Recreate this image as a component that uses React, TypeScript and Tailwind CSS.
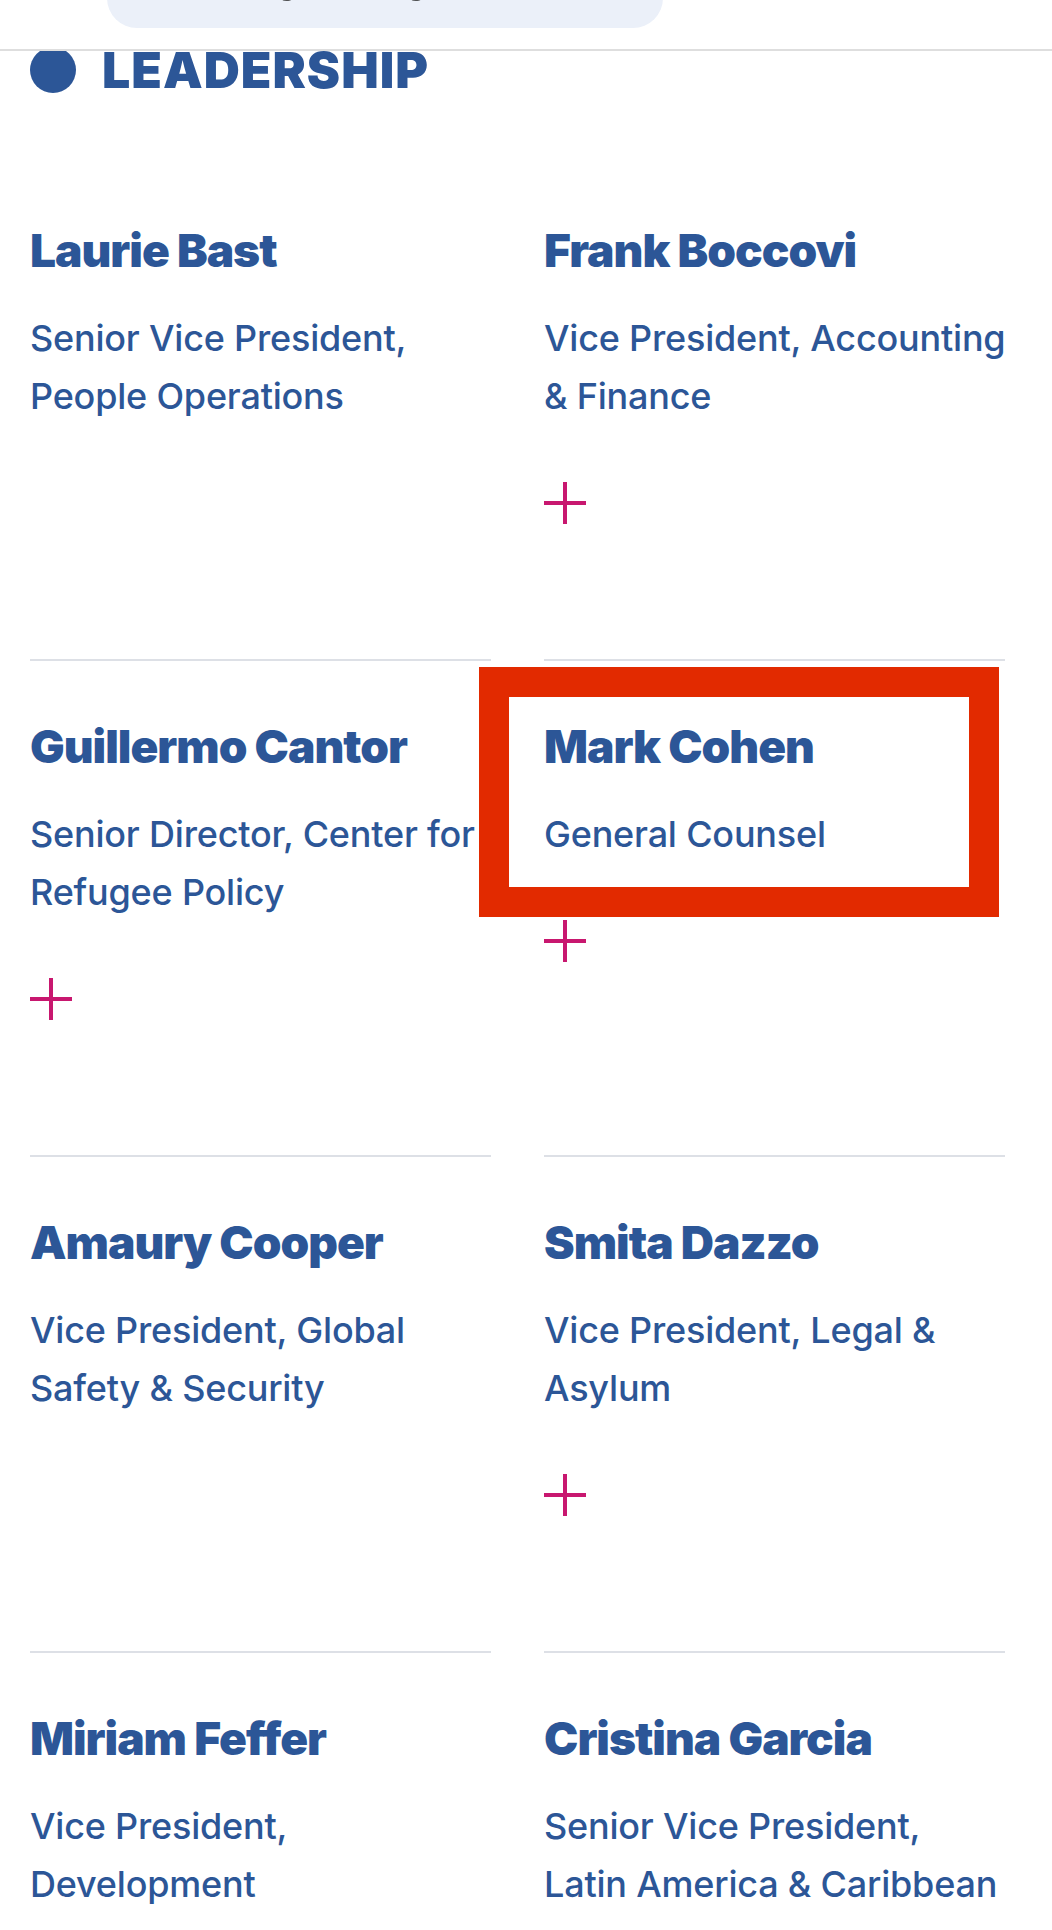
import React from "react";

interface Leader {
  name: string;
  title: string[];
  more: boolean;
  marked?: boolean;
}

const leaders: Leader[] = [
  { name: "Laurie Bast", title: ["Senior Vice President,", "People Operations"], more: false },
  { name: "Frank Boccovi", title: ["Vice President, Accounting", "& Finance"], more: true },
  { name: "Guillermo Cantor", title: ["Senior Director, Center for", "Refugee Policy"], more: true },
  { name: "Mark Cohen", title: ["General Counsel"], more: true, marked: true },
  { name: "Amaury Cooper", title: ["Vice President, Global", "Safety & Security"], more: false },
  { name: "Smita Dazzo", title: ["Vice President, Legal &", "Asylum"], more: true },
  { name: "Miriam Feffer", title: ["Vice President,", "Development"], more: false },
  { name: "Cristina Garcia", title: ["Senior Vice President,", "Latin America & Caribbean"], more: true },
];

const PlusIcon = () => (
  <svg width="42" height="42" viewBox="0 0 42 42" fill="none">
    <path d="M21 0v42M0 21h42" stroke="#c8176f" strokeWidth="4" />
  </svg>
);

const LeaderCard = ({ leader, first }: { leader: Leader; first: boolean }) => {
  return (
    <div
      className={`relative border-t-2 pt-[57px] pb-[135px] ${
        first ? "border-transparent" : "border-[#dde0e6]"
      }`}
    >
      <h3 className="text-[46px] leading-[56px] font-black tracking-[-1px] text-[#2c5697] whitespace-nowrap">
        {leader.name}
      </h3>
      <p className="mt-[31px] text-[36px] leading-[58px] font-[450] tracking-[-0.2px] text-[#2c5697] whitespace-nowrap">
        {leader.title.map((line) => (
          <span key={line} className="block">
            {line}
          </span>
        ))}
      </p>
      {leader.more && (
        <button className="mt-[57px] block">
          <PlusIcon />
        </button>
      )}
      {/* annotation box around the selected person */}
      {leader.marked && (
        <div className="pointer-events-none absolute left-[-65px] top-[6px] h-[250px] w-[520px] border-[30px] border-[#e22a00]" />
      )}
    </div>
  );
};

export default function App() {
  return (
    <div
      className="h-[1930px] w-[1052px] overflow-hidden bg-white"
      style={{ fontFamily: "Inter, 'Noto Sans', sans-serif" }}
    >
      <header className="sticky top-0 z-10 flex h-[51px] items-start border-b-2 border-[#dedede] bg-white">
        <div className="ml-[107px] -mt-[32px] flex h-[60px] w-[556px] items-start justify-center overflow-hidden rounded-full bg-[#ebf0f9]">
          <span className="-mt-[12px] text-[36px] leading-[48px] text-[#1a1a1a] whitespace-nowrap">
            Jump to region or group (optional)
          </span>
        </div>
      </header>

      <main className="pl-[30px]">
        <div className="-mt-[11px] flex h-[60px] items-center gap-[26px]">
          <span className="block h-[46px] w-[46px] rounded-full bg-[#2c5697]" />
          <h2 className="text-[50px] leading-[60px] font-black tracking-[1px] text-[#2c5697]">
            LEADERSHIP
          </h2>
        </div>

        <div className="mt-[63px] grid grid-cols-[461px_461px] gap-x-[53px]">
          {leaders.map((leader, i) => (
            <LeaderCard key={leader.name} leader={leader} first={i < 2} />
          ))}
        </div>
      </main>
    </div>
  );
}
